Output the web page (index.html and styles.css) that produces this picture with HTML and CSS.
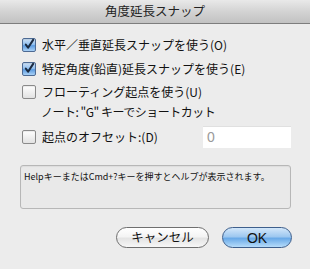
FILE: index.html
```html
<!DOCTYPE html>
<html lang="ja">
<head>
<meta charset="utf-8">
<title>角度延長スナップ</title>
<link rel="stylesheet" href="styles.css">
</head>
<body>
<div class="dialog">
  <div class="titlebar">角度延長スナップ</div>
  <div class="content">
    <div class="row r1">
      <span class="cb on"><svg width="13" height="13" viewBox="0 0 13 13"><path d="M3 6.5 L5.5 10 L11 1.5" fill="none" stroke="#1a2a40" stroke-width="2.2" stroke-linecap="round" stroke-linejoin="round"/></svg></span>
      <span class="label">水平／垂直延長スナップを使う(O)</span>
    </div>
    <div class="row r2">
      <span class="cb on"><svg width="13" height="13" viewBox="0 0 13 13"><path d="M3 6.5 L5.5 10 L11 1.5" fill="none" stroke="#1a2a40" stroke-width="2.2" stroke-linecap="round" stroke-linejoin="round"/></svg></span>
      <span class="label">特定角度(鉛直)延長スナップを使う(E)</span>
    </div>
    <div class="row r3">
      <span class="cb"></span>
      <span class="label">フローティング起点を使う(U)</span>
    </div>
    <div class="note">ノート: "G" キーでショートカット</div>
    <div class="row r4">
      <span class="cb"></span>
      <span class="label">起点のオフセット:(D)</span>
      <span class="input">0</span>
    </div>
    <div class="help">HelpキーまたはCmd+?キーを押すとヘルプが表示されます。</div>
    <div class="buttons">
      <span class="btn cancel">キャンセル</span>
      <span class="btn ok">OK</span>
    </div>
  </div>
</div>
</body>
</html>
```
FILE: styles.css
```css
html, body {
  margin: 0;
  padding: 0;
}
body {
  width: 310px;
  height: 269px;
  overflow: hidden;
  background: #ececec;
  font-family: "Noto Sans CJK JP", "Noto Sans", sans-serif;
  color: #111;
}
.dialog {
  width: 310px;
  height: 269px;
  display: flex;
  flex-direction: column;
  background: #ececec;
}
.titlebar {
  height: 23px;
  border-bottom: 1px solid #7d7d7d;
  background: linear-gradient(#e9e9e9, #d3d3d3 50%, #c2c2c2);
  display: flex;
  align-items: center;
  justify-content: center;
  font-size: 12.5px;
  color: #222;
  line-height: 1;
}
.content {
  display: flex;
  flex-direction: column;
  padding: 9px 18px 0 22px;
}
.row {
  display: flex;
  align-items: center;
  font-size: 12px;
  line-height: 1;
}
.r1, .r2 { height: 24px; }
.r3 { height: 22px; }
.r4 { height: 23px; margin-top: 4px; }
.cb {
  width: 12px;
  height: 12px;
  border: 1px solid #8a8a8a;
  border-radius: 2px;
  background: linear-gradient(#ffffff, #f0f0f0 50%, #e2e2e2);
  box-sizing: content-box;
  display: flex;
  flex: none;
  box-shadow: inset 0 1px 1px rgba(0,0,0,0.08);
}
.cb.on {
  border-color: #4d6a93;
  background: linear-gradient(#cfe2f7, #8bbcee 50%, #5c9be0 55%, #a9d1f6);
}
.cb svg { display: block; margin: -1px 0 0 0; }
.label {
  margin-left: 6px;
  white-space: nowrap;
}
.note {
  height: 18px;
  display: flex;
  align-items: center;
  padding-left: 19px;
  font-size: 12px;
  letter-spacing: -0.5px;
  line-height: 1;
  white-space: nowrap;
}
.input {
  margin-left: auto;
  margin-right: 1px;
  width: 88px;
  height: 22px;
  background: #fff;
  border-top: 1px solid #e0e0e0;
  box-sizing: border-box;
  color: #9a9a9a;
  font-family: "Liberation Sans", sans-serif;
  font-size: 14px;
  display: flex;
  align-items: center;
  padding-left: 4px;
}
.help {
  margin: 17px 0 0 -2px;
  width: 271px;
  height: 44px;
  box-sizing: border-box;
  border: 1px solid #b7b7b7;
  border-radius: 3px;
  background: #e9e9e9;
  font-size: 9px;
  line-height: 1;
  padding: 6px 0 0 3px;
  white-space: nowrap;
  box-shadow: inset 0 1px 1px rgba(0,0,0,0.05);
}
.buttons {
  margin-top: 18px;
  display: flex;
  justify-content: flex-end;
  gap: 13px;
}
.btn {
  height: 21px;
  box-sizing: border-box;
  border-radius: 11px;
  display: flex;
  align-items: center;
  justify-content: center;
  font-size: 12.5px;
  line-height: 1;
}
.cancel {
  width: 93px;
  border: 1px solid #6f6f6f;
  background: linear-gradient(#ffffff, #f4f4f4 45%, #e4e4e4 55%, #f7f7f7);
  color: #111;
}
.ok {
  width: 70px;
  border: 1px solid #3e5f8c;
  background: linear-gradient(#d3e7fa, #9ec8f0 45%, #6aaae8 55%, #b6dcfa);
  font-family: "Liberation Sans", sans-serif;
  font-size: 14px;
  color: #111;
}
```
